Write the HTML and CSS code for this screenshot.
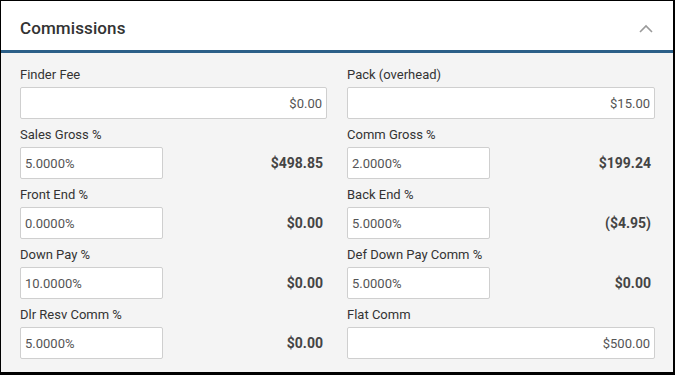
FILE: index.html
```html
<!DOCTYPE html>
<html>
<head>
<meta charset="utf-8">
<link rel="stylesheet" href="styles.css">
</head>
<body>
<div class="panel">
  <div class="panel-header">
    <h2 class="panel-title">Commissions</h2>
    <svg class="chevron" width="14" height="9" viewBox="0 0 14 9"><path d="M1 8 L7 2 L13 8" fill="none" stroke="#9a9a9a" stroke-width="1.6"/></svg>
  </div>
  <div class="panel-body">
    <div class="field">
      <label class="label">Finder Fee</label>
      <div class="input wide right">$0.00</div>
    </div>
    <div class="field">
      <label class="label">Pack (overhead)</label>
      <div class="input wide right">$15.00</div>
    </div>

    <div class="field">
      <label class="label">Sales Gross %</label>
      <div class="pair"><div class="input small">5.0000%</div><span class="amount">$498.85</span></div>
    </div>
    <div class="field">
      <label class="label">Comm Gross %</label>
      <div class="pair"><div class="input small">2.0000%</div><span class="amount">$199.24</span></div>
    </div>

    <div class="field">
      <label class="label">Front End %</label>
      <div class="pair"><div class="input small">0.0000%</div><span class="amount">$0.00</span></div>
    </div>
    <div class="field">
      <label class="label">Back End %</label>
      <div class="pair"><div class="input small">5.0000%</div><span class="amount">($4.95)</span></div>
    </div>

    <div class="field">
      <label class="label">Down Pay %</label>
      <div class="pair"><div class="input small">10.0000%</div><span class="amount">$0.00</span></div>
    </div>
    <div class="field">
      <label class="label">Def Down Pay Comm %</label>
      <div class="pair"><div class="input small">5.0000%</div><span class="amount">$0.00</span></div>
    </div>

    <div class="field">
      <label class="label">Dlr Resv Comm %</label>
      <div class="pair"><div class="input small">5.0000%</div><span class="amount">$0.00</span></div>
    </div>
    <div class="field">
      <label class="label">Flat Comm</label>
      <div class="input wide right">$500.00</div>
    </div>
  </div>
</div>
</body>
</html>
```

FILE: styles.css
```css
* { box-sizing: border-box; }
html, body { margin: 0; padding: 0; }
body {
  width: 675px;
  height: 375px;
  font-family: Roboto, "Liberation Sans", sans-serif;
  color: #333;
  background: #fff;
  overflow: hidden;
}
.panel {
  width: 675px;
  height: 375px;
  border-top: 1px solid #000;
  border-left: 1px solid #000;
  border-right: 2px solid #000;
  border-bottom: 3px solid #000;
  background: #f4f4f4;
  display: flex;
  flex-direction: column;
}
.panel-header {
  height: 52px;
  background: #fff;
  border-bottom: 3px solid #2b5f88;
  display: flex;
  align-items: center;
  justify-content: space-between;
  padding: 5px 20px 0 19px;
}
.panel-title {
  margin: 0;
  font-size: 17px;
  font-weight: 500;
  color: #333;
  letter-spacing: 0.1px;
}
.chevron { display: block; margin-top: 1px; }
.panel-body {
  display: grid;
  grid-template-columns: 307px 308px;
  column-gap: 20px;
  row-gap: 8px;
  padding: 14px 18px 0 19px;
}
.field {
  display: flex;
  flex-direction: column;
}
.label {
  font-size: 13px;
  line-height: 16px;
  height: 16px;
  margin-bottom: 4px;
  color: #333;
}
.input {
  height: 32px;
  background: #fff;
  border: 1px solid #cfcfcf;
  border-radius: 2px;
  font-size: 13px;
  color: #555;
  display: flex;
  align-items: center;
  padding: 0 4px;
}
.input.right { justify-content: flex-end; }
.input.small { width: 143px; }
.pair {
  display: flex;
  align-items: center;
  justify-content: space-between;
  padding-right: 4px;
}
.amount {
  font-size: 14px;
  font-weight: 700;
  color: #444;
}
```
